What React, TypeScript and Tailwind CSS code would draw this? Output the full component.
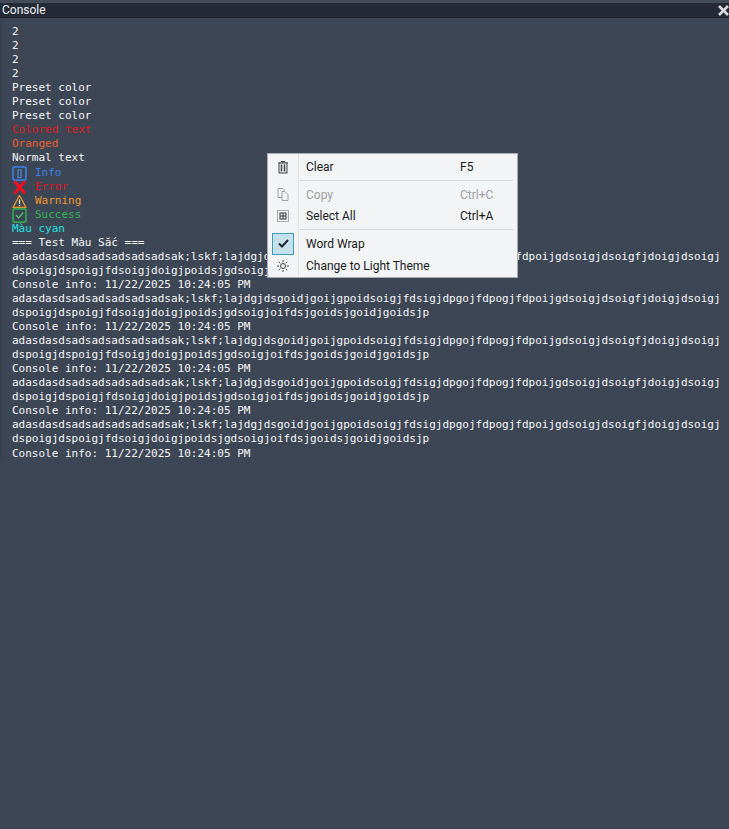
const mono = "font-['DejaVu_Sans_Mono',monospace]";

function InfoIcon() {
  return (
    <svg width="15" height="15" viewBox="0 0 15 15" fill="none" className="mr-2 shrink-0">
      <rect x="1" y="0.9" width="13" height="13.2" rx="2" stroke="#3b7ddc" strokeWidth="1.7" />
      <rect x="6" y="4" width="3" height="7.5" stroke="#4a8ae6" strokeWidth="1.1" />
    </svg>
  );
}
function ErrorIcon() {
  return (
    <svg width="15" height="15" viewBox="0 0 15 15" fill="none" className="mr-2 shrink-0">
      <path d="M2.5 1.2L13 13.5M13 1.2L2.5 13.5" stroke="#f01020" strokeWidth="3" />
    </svg>
  );
}
function WarningIcon() {
  return (
    <svg width="15" height="15" viewBox="0 0 15 15" fill="none" className="mr-2 shrink-0">
      <path d="M7.5 1.5L14 13.5H1z" stroke="#e8952c" strokeWidth="1.4" strokeLinejoin="round" />
      <path d="M7.5 5.5v4.5M7.5 11v1.3" stroke="#f4e4c8" strokeWidth="1.2" />
    </svg>
  );
}
function SuccessIcon() {
  return (
    <svg width="15" height="15" viewBox="0 0 15 15" fill="none" className="mr-2 shrink-0">
      <rect x="1" y="0.9" width="13" height="13.2" rx="2" stroke="#2fa84c" strokeWidth="1.7" />
      <path d="M4 7l2.7 3L11.2 4.5" stroke="#58c06e" strokeWidth="1.3" />
    </svg>
  );
}

function Line({
  children,
  color = "text-[#f6f7f8]",
  extra = "",
}: {
  children: React.ReactNode;
  color?: string;
  extra?: string;
}) {
  return <div className={`h-[14px] leading-[14px] whitespace-pre flex items-center ${color} ${extra}`}>{children}</div>;
}

const long1 = "adasdasdsadsadsadsadsadsak;lskf;lajdgjdsgoidjgoijgpoidsoigjfdsigjdpgojfdpogjfdpoijgdsoigjdsoigfjdoigjdsoigj";
const long2 = "dspoigjdspoigjfdsoigjdoigjpoidsjgdsoigjoifdsjgoidsjgoidjgoidsjp";

function Block({ last }: { last?: boolean }) {
  return (
    <>
      <Line>{long1}</Line>
      <Line>{long2}</Line>
      <Line extra={last ? "mt-px" : ""}>Console info: 11/22/2025 10:24:05 PM</Line>
    </>
  );
}

function MenuRow({
  label,
  shortcut,
  icon,
  disabled,
  h = "h-[22px]",
}: {
  label: string;
  shortcut?: string;
  icon: React.ReactNode;
  disabled?: boolean;
  h?: string;
}) {
  return (
    <div className={`flex items-center ${h} ${disabled ? "text-[#a0a0a0]" : "text-[#1a1a1a]"}`}>
      <div className="w-[30px] shrink-0 flex items-center justify-center">{icon}</div>
      <div className="w-[162px] pl-[8px] shrink-0 whitespace-pre">{label}</div>
      <div className="whitespace-pre">{shortcut}</div>
    </div>
  );
}

function Sep() {
  return (
    <div className="flex h-[5px] items-center">
      <div className="w-[30px]" />
      <div className="ml-[2px] w-[213px] h-px bg-[#d6d8da]" />
    </div>
  );
}

export default function App() {
  return (
    <div className="relative w-[729px] h-[829px] overflow-hidden bg-[#3d4655] border-t-[3px] border-[#454c59]">
      <div className="h-[15px] bg-[#232a35] flex items-center justify-between border-b border-[#1d232c] font-['Roboto',sans-serif] text-[12px] text-[#eef0f2] pl-[2px]">
        <span className="leading-[14px]">Console</span>
        <svg width="11" height="11" viewBox="0 0 11 11" className="shrink-0">
          <path d="M1 1l9 9M10 1l-9 9" stroke="#d8dadd" strokeWidth="2.6" />
        </svg>
      </div>
      <div className={`pt-[7px] pl-[10px] text-[11px] ${mono} border-l-[2px] border-[#39424f]`}>
        <Line>2</Line>
        <Line>2</Line>
        <Line>2</Line>
        <Line>2</Line>
        <Line>Preset color</Line>
        <Line>Preset color</Line>
        <Line>Preset color</Line>
        <Line color="text-[#e01a1a]">Colored text</Line>
        <Line color="text-[#f0602a]">Oranged</Line>
        <Line>Normal text</Line>
        <Line color="text-[#3b82e8]" extra="mt-px"><InfoIcon />Info</Line>
        <Line color="text-[#e0141f]"><ErrorIcon />Error</Line>
        <Line color="text-[#f09a28]"><WarningIcon />Warning</Line>
        <Line color="text-[#2fb84e]"><SuccessIcon />Success</Line>
        <Line color="text-[#22e0e0]">Màu cyan</Line>
        <Line>=== Test Màu Sắc ===</Line>
        <Block />
        <Block />
        <Block />
        <Block />
        <Block last />
      </div>

      <div className="absolute left-[267px] top-[150px] w-[251px] h-[125px] bg-[#f2f4f6] border border-[#a8adb3] font-['Roboto',sans-serif] text-[12px] flex flex-col pt-[2px]">
        <div className="absolute left-[30px] top-[1px] bottom-[1px] w-px bg-[#dcdee0]" />
        <MenuRow
          label="Clear"
          shortcut="F5"
          icon={
            <svg width="12" height="14" viewBox="0 0 12 14" fill="none">
              <path d="M4 1.5h4M1 3h10" stroke="#444" strokeWidth="1" />
              <rect x="2" y="3" width="8" height="10" fill="#e8e8e8" stroke="#444" />
              <path d="M4.5 4.5v7M7.5 4.5v7" stroke="#444" strokeWidth="1.4" />
            </svg>
          }
        />
        <Sep />
        <MenuRow
          label="Copy"
          shortcut="Ctrl+C"
          disabled
          h="h-[23px]"
          icon={
            <svg width="12" height="13" viewBox="0 0 12 13" fill="none">
              <path d="M1 .5h5l1 1v8H1z" fill="#f2f4f6" stroke="#a0a0a0" />
              <path d="M5 3.5h3l3 3v6H5z" fill="#f2f4f6" stroke="#a0a0a0" />
            </svg>
          }
        />
        <MenuRow
          label="Select All"
          shortcut="Ctrl+A"
          h="h-[20px] mb-px"
          icon={
            <svg width="12" height="12" viewBox="0 0 12 12" fill="none">
              <rect x=".5" y=".5" width="11" height="11" stroke="#666" strokeDasharray="1 1" />
              <rect x="3" y="3" width="6" height="6" stroke="#333" />
              <path d="M6 3v6M3 6h6" stroke="#333" />
            </svg>
          }
        />
        <Sep />
        <MenuRow
          label="Word Wrap"
          h="h-[23px]"
          icon={
            <div className="w-[22px] h-[22px] bg-[#c4e0ea] border border-[#3f9cb8] flex items-center justify-center">
              <svg width="11" height="9" viewBox="0 0 11 9" fill="none">
                <path d="M1 4.5l3 3 6-6.5" stroke="#1c2530" strokeWidth="2" />
              </svg>
            </div>
          }
        />
        <MenuRow
          label="Change to Light Theme"
          h="h-[21px]"
          icon={
            <svg width="12" height="12" viewBox="0 0 12 12" fill="none" stroke="#444">
              <circle cx="6" cy="6" r="2.5" />
              <path d="M6 0v2M6 10v2M0 6h2M10 6h2M1.8 1.8l1.4 1.4M8.8 8.8l1.4 1.4M10.2 1.8L8.8 3.2M3.2 8.8l-1.4 1.4" />
            </svg>
          }
        />
      </div>
    </div>
  );
}
